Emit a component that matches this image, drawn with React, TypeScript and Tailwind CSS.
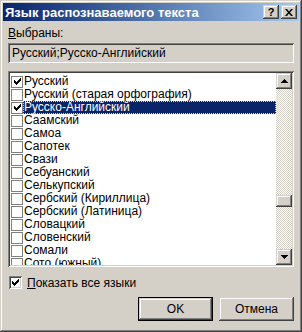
const items = [
  { name: 'Русский', checked: true },
  { name: 'Русский (старая орфография)', checked: false },
  { name: 'Русско-Английский', checked: true, selected: true },
  { name: 'Саамский', checked: false },
  { name: 'Самоа', checked: false },
  { name: 'Сапотек', checked: false },
  { name: 'Свази', checked: false },
  { name: 'Себуанский', checked: false },
  { name: 'Селькупский', checked: false },
  { name: 'Сербский (Кириллица)', checked: false },
  { name: 'Сербский (Латиница)', checked: false },
  { name: 'Словацкий', checked: false },
  { name: 'Словенский', checked: false },
  { name: 'Сомали', checked: false },
  { name: 'Сото (южный)', checked: false },
];

const raised =
  'shadow-[inset_-1px_-1px_#404040,inset_1px_1px_#d4d0c8,inset_-2px_-2px_#808080,inset_2px_2px_#ffffff]';
const sunken =
  'shadow-[inset_1px_1px_#808080,inset_-1px_-1px_#ffffff,inset_2px_2px_#404040,inset_-2px_-2px_#d4d0c8]';

const Tick = () => (
  <svg width="7" height="7" viewBox="0 0 7 7" className="block">
    <path d="M0 2h1v1h1v1h1v-1h1v-1h1v-1h1v-1h1v3h-1v1h-1v1h-1v1h-1v1h-1v-1h-1v-1h-1z" fill="#000" />
  </svg>
);

const ListCheck = ({ checked }: { checked: boolean }) => (
  <div className="w-[12px] h-[12px] border border-[#808080] bg-white flex items-center justify-center shrink-0">
    {checked ? <Tick /> : null}
  </div>
);

const Arrow = ({ up }: { up?: boolean }) => (
  <div className={`w-[16px] h-[16px] bg-[#d4d0c8] flex items-center justify-center ${raised}`}>
    <svg width="7" height="4" viewBox="0 0 7 4">
      {up ? <path d="M3 0h1v1h1v1h1v1h1v1h-7v-1h1v-1h1v-1h1z" fill="#000" /> : <path d="M0 0h7v1h-1v1h-1v1h-1v1h-1v-1h-1v-1h-1v-1h-1z" fill="#000" />}
    </svg>
  </div>
);

const App = () => {
  return (
    <div
      className={`w-[302px] h-[332px] bg-[#d4d0c8] p-[3px] flex flex-col text-[12px] text-black ${raised}`}
      style={{ fontFamily: '"Liberation Sans", Arial, sans-serif' }}
    >
      <div className="h-[18px] bg-gradient-to-r from-[#0a246a] to-[#a6caf0] flex items-center pl-[2px] pr-[2px]">
        <span className="text-white font-bold text-[13px] flex-1 leading-none">Язык распознаваемого текста</span>
        <div className={`w-[16px] h-[14px] bg-[#d4d0c8] flex items-center justify-center font-bold text-[11px] leading-none ${raised}`}>?</div>
        <div className={`w-[16px] h-[14px] ml-[2px] bg-[#d4d0c8] flex items-center justify-center ${raised}`}>
          <svg width="8" height="7" viewBox="0 0 8 7">
            <path d="M0 0h2l2 2.5 2-2.5h2l-3 3.5 3 3.5h-2l-2-2.5-2 2.5h-2l3-3.5z" fill="#000" />
          </svg>
        </div>
      </div>

      <div className="flex flex-col px-[5px] pt-[6px]">
        <div className="h-[13px] leading-[13px]">
          <span className="underline">В</span>ыбраны:
        </div>
        <div className={`mt-[3px] h-[20px] bg-[#d4d0c8] px-[4px] flex items-center ${sunken}`}>
          Русский;Русско-Английский
        </div>

        <div className={`mt-[8px] h-[196px] bg-white p-[2px] flex ${sunken}`}>
          <div className="flex-1 overflow-hidden pt-[2px]">
            {items.map((it, k) => (
              <div key={k} className="h-[13px] flex items-center pl-[1px]">
                <ListCheck checked={it.checked} />
                <div
                  className={`h-[13px] leading-[13px] flex items-center px-[1px] ${
                    it.selected
                      ? 'flex-1 bg-[#0a246a] text-white outline outline-1 outline-dotted outline-[#d4d0c8] -outline-offset-1'
                      : ''
                  }`}
                >
                  {it.name}
                </div>
              </div>
            ))}
          </div>
          <div className="w-[16px] flex flex-col bg-[repeating-conic-gradient(#d4d0c8_0_25%,#ffffff_0_50%)] bg-[length:2px_2px]">
            <Arrow up />
            <div className="h-[106px]" />
            <div className={`h-[12px] bg-[#d4d0c8] ${raised}`} />
            <div className="flex-1" />
            <Arrow />
          </div>
        </div>

        <div className="mt-[9px] h-[13px] flex items-center">
          <div className={`w-[13px] h-[13px] bg-white flex items-center justify-center ml-[1px] ${sunken}`}>
            <Tick />
          </div>
          <span className="ml-[5px]">
            <span className="underline">П</span>оказать все языки
          </span>
        </div>

        <div className="mt-[8px] flex justify-end gap-[6px]">
          <div className="w-[75px] h-[24px] border border-black">
            <div className={`w-full h-full bg-[#d4d0c8] flex items-center justify-center ${raised}`}>OK</div>
          </div>
          <div className={`w-[75px] h-[24px] bg-[#d4d0c8] flex items-center justify-center ${raised}`}>Отмена</div>
        </div>
      </div>
    </div>
  );
};

export default App;
